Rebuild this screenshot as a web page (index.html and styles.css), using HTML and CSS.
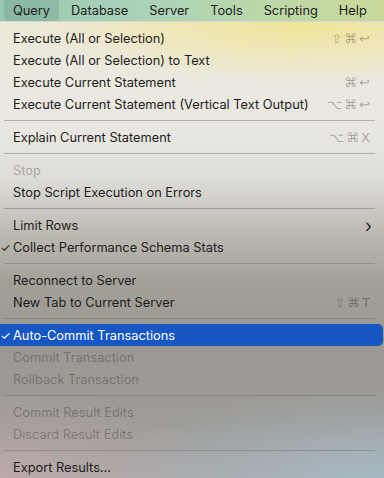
FILE: index.html
```html
<!DOCTYPE html>
<html lang="en">
<head>
  <meta charset="UTF-8" />
  <title>Query Menu</title>
  <link rel="stylesheet" href="styles.css">
</head>
<body>
  <div class="menubar">
    <span class="menubar-item active">Query</span>
    <span class="menubar-item">Database</span>
    <span class="menubar-item">Server</span>
    <span class="menubar-item">Tools</span>
    <span class="menubar-item">Scripting</span>
    <span class="menubar-item">Help</span>
  </div>

  <div class="menu">
    <div class="item"><span class="label">Execute (All or Selection)</span><span class="keys">⇧⌘↩</span></div>
    <div class="item"><span class="label">Execute (All or Selection) to Text</span></div>
    <div class="item"><span class="label">Execute Current Statement</span><span class="keys">⌘↩</span></div>
    <div class="item"><span class="label">Execute Current Statement (Vertical Text Output)</span><span class="keys">⌥⌘↩</span></div>
    <div class="sep"></div>
    <div class="item"><span class="label">Explain Current Statement</span><span class="keys">⌥⌘X</span></div>
    <div class="sep"></div>
    <div class="item disabled"><span class="label">Stop</span></div>
    <div class="item"><span class="label">Stop Script Execution on Errors</span></div>
    <div class="sep"></div>
    <div class="item"><span class="label">Limit Rows</span><span class="arrow">›</span></div>
    <div class="item checked"><span class="label">Collect Performance Schema Stats</span></div>
    <div class="sep"></div>
    <div class="item"><span class="label">Reconnect to Server</span></div>
    <div class="item"><span class="label">New Tab to Current Server</span><span class="keys">⇧⌘T</span></div>
    <div class="sep"></div>
    <div class="item checked selected"><span class="label">Auto-Commit Transactions</span></div>
    <div class="item disabled"><span class="label">Commit Transaction</span></div>
    <div class="item disabled"><span class="label">Rollback Transaction</span></div>
    <div class="sep"></div>
    <div class="item disabled"><span class="label">Commit Result Edits</span></div>
    <div class="item disabled"><span class="label">Discard Result Edits</span></div>
    <div class="sep"></div>
    <div class="item"><span class="label">Export Results...</span></div>
  </div>
</body>
</html>
```

FILE: styles.css
```css
body {
  margin: 0;
  width: 384px;
  height: 478px;
  overflow: hidden;
  font-family: 'Inter', 'Liberation Sans', sans-serif;
  font-size: 12.8px;
  color: #1d1d1d;
}

.menubar {
  height: 21px;
  display: flex;
  align-items: stretch;
  padding-left: 4px;
  background: linear-gradient(90deg, #98c8b2 0%, #a9d2b8 35%, #bcd8a8 70%, #c9d99a 100%);
}

.menubar-item {
  display: flex;
  align-items: center;
  padding: 0 9px;
  margin-right: 3px;
  border-radius: 0 0 4px 4px;
}

.menubar-item.active {
  background-color: rgba(60, 110, 95, 0.18);
}

.menu {
  height: 457px;
  padding-top: 5px;
  box-sizing: border-box;
  border-top: 1px solid rgba(255, 255, 255, 0.5);
  background:
    radial-gradient(ellipse 260px 60px at 300px 0px, rgba(242, 226, 130, 0.75), rgba(242, 226, 130, 0)),
    radial-gradient(ellipse 220px 90px at 0px 457px, rgba(200, 170, 175, 0.6), rgba(200, 170, 175, 0)),
    radial-gradient(ellipse 280px 90px at 384px 457px, rgba(165, 190, 205, 0.75), rgba(165, 190, 205, 0)),
    linear-gradient(180deg, #ece9d6 0px, #ebe9df 50px, #e8e6e1 120px, #dcdad5 160px, #bdbab4 210px, #a3a09a 260px, #9b9893 320px, #9d9b97 400px, #a8a7a6 457px);
}

.item {
  height: 22px;
  display: flex;
  align-items: center;
  padding: 0 12px 0 13px;
  position: relative;
}

.item .label {
  flex: 1;
}

.keys {
  font-family: 'DejaVu Sans', sans-serif;
  font-size: 13px;
  color: rgba(0, 0, 0, 0.3);
  letter-spacing: 2px;
}

.arrow {
  font-size: 18px;
  color: #2a2a2a;
}

.item.disabled {
  color: rgba(0, 0, 0, 0.27);
}

.item.checked::before {
  content: '✓';
  position: absolute;
  left: 0;
  font-size: 12px;
}

.item.selected {
  background-color: #1756c5;
  color: #ffffff;
  border-radius: 0 5px 5px 0;
  margin-right: 1px;
}

.sep {
  height: 1px;
  margin: 5px 9px 5px 4px;
  background-color: rgba(110, 108, 102, 0.45);
}
```
